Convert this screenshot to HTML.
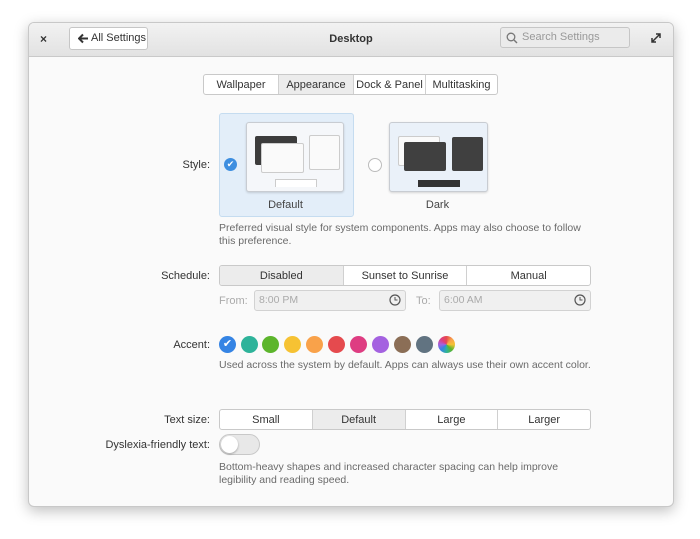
<!DOCTYPE html>
<html><head><style>
body{margin:0;width:700px;height:539px;background:#fff;font-family:"Liberation Sans",sans-serif;font-size:11px;color:#333;position:relative;overflow:hidden;white-space:nowrap}
.win{position:absolute;left:28px;top:22px;width:644px;height:483px;background:#fafafa;border:1px solid #c8c8c8;border-radius:6px;box-shadow:0 4px 14px rgba(0,0,0,.25);overflow:hidden}
.hdr{position:absolute;left:0;top:0;width:644px;height:33px;background:linear-gradient(#f2f2f2,#e2e2e2);border-bottom:1px solid #c9c9c9}
.a{position:absolute}
.btn{position:absolute;background:#fff;border:1px solid #c6c6c6;border-radius:3px;box-sizing:border-box}
.seg{position:absolute;display:flex;border:1px solid #c9c9c9;border-radius:3px;box-sizing:border-box;background:#fff;overflow:hidden}
.seg div{flex:1;text-align:center;border-left:1px solid #d0d0d0;box-sizing:border-box}
.seg div:first-child{border-left:none}
.seg .on{background:#ececec}
.lbl{position:absolute;text-align:right;width:200px}
.c{position:absolute;width:17px;height:17px;border-radius:50%}
.hint{position:absolute;color:#6a6a6a;font-size:10.5px;line-height:13px;white-space:normal}
.inp{position:absolute;background:#f0f0f0;border:1px solid #d2d2d2;border-radius:3px;box-sizing:border-box;height:21px;color:#aaa;padding-left:4px;line-height:19px;font-size:10.5px}
</style></head><body>
<div class="win">
<div class="hdr">
<div class="a" style="left:11px;top:9px;font-size:12px;font-weight:bold">×</div>
<div class="btn" style="left:40px;top:4px;width:79px;height:23px;line-height:21px;padding-left:21px">All Settings</div>
<svg class="a" style="left:49px;top:10px" width="11" height="11"><path d="M1 5.5H10M5 1.5L1 5.5L5 9.5" stroke="#333" stroke-width="2" fill="none"/></svg>
<div class="a" style="left:0;width:644px;top:10px;text-align:center;font-weight:bold">Desktop</div>
<div class="a" style="left:471px;top:4px;width:130px;height:21px;background:#ebebeb;border:1px solid #c6c6c6;border-radius:3px;box-sizing:border-box;color:#999;line-height:19px;padding-left:21px">Search Settings</div>
<svg class="a" style="left:477px;top:9px" width="12" height="12"><circle cx="5" cy="5" r="3.8" fill="none" stroke="#777" stroke-width="1.3"/><path d="M8 8L11 11" stroke="#777" stroke-width="1.4"/></svg>
<svg class="a" style="left:621px;top:9px" width="12" height="12"><path d="M2 10L10 2M6 2H10V6M2 6V10H6" stroke="#333" stroke-width="1.5" fill="none"/></svg>
</div>
<div class="seg" style="left:174px;top:51px;width:295px;height:21px;line-height:20px"><div style="flex:0 0 74px">Wallpaper</div><div class="on" style="flex:0 0 75px">Appearance</div><div style="flex:0 0 72px">Dock &amp; Panel</div><div>Multitasking</div></div>

<div class="lbl" style="left:-19px;top:136px">Style:</div>
<div class="a" style="left:190px;top:90px;width:133px;height:102px;background:#e3eef9;border:1px solid #c5dcf0;border-radius:3px"></div>
<div class="a" style="left:195px;top:135px;width:13px;height:13px;border-radius:50%;background:#3d8ee0;color:#fff;font-size:9px;line-height:13px;text-align:center">✔</div>
<div class="a" style="left:217px;top:99px;width:96px;height:68px;background:#f5f7fa;border:1px solid #c8ccd2;border-radius:3px;box-shadow:0 1px 2px rgba(0,0,0,.15)">
 <div class="a" style="left:8px;top:13px;width:42px;height:29px;background:#3c3c3c;border-radius:2px"></div>
 <div class="a" style="left:14px;top:20px;width:41px;height:28px;background:#fafafa;border:1px solid #ccc;border-radius:2px"></div>
 <div class="a" style="left:62px;top:12px;width:29px;height:33px;background:#fafafa;border:1px solid #ccc;border-radius:2px"></div>
 <div class="a" style="left:28px;top:56px;width:40px;height:7px;border:1px solid #ccc;border-bottom:none;background:#fff"></div>
</div>
<div class="a" style="left:190px;top:176px;width:133px;text-align:center;color:#444">Default</div>
<div class="a" style="left:339px;top:135px;width:12px;height:12px;border-radius:50%;border:1px solid #bbb;background:#fff"></div>
<div class="a" style="left:360px;top:99px;width:97px;height:68px;background:#eaf1f9;border:1px solid #c8ccd2;border-radius:3px;box-shadow:0 1px 2px rgba(0,0,0,.15)">
 <div class="a" style="left:8px;top:13px;width:40px;height:28px;background:#fafafa;border:1px solid #ccc;border-radius:2px"></div>
 <div class="a" style="left:14px;top:19px;width:42px;height:29px;background:#404040;border-radius:2px"></div>
 <div class="a" style="left:62px;top:14px;width:31px;height:34px;background:#404040;border-radius:2px"></div>
 <div class="a" style="left:28px;top:57px;width:42px;height:7px;background:#333"></div>
</div>
<div class="a" style="left:360px;top:176px;width:97px;text-align:center;color:#444">Dark</div>
<div class="hint" style="left:190px;top:199px;width:370px">Preferred visual style for system components. Apps may also choose to follow this preference.</div>

<div class="lbl" style="left:-19px;top:247px">Schedule:</div>
<div class="seg" style="left:190px;top:242px;width:372px;height:21px;line-height:20px"><div class="on">Disabled</div><div>Sunset to Sunrise</div><div>Manual</div></div>
<div class="a" style="left:190px;top:272px;color:#aaa">From:</div>
<div class="inp" style="left:225px;top:267px;width:152px">8:00 PM</div>
<div class="a" style="left:387px;top:272px;color:#aaa">To:</div>
<div class="inp" style="left:410px;top:267px;width:152px">6:00 AM</div>
<svg class="a" style="left:360px;top:271px" width="12" height="12"><circle cx="6" cy="6" r="5" fill="none" stroke="#555" stroke-width="1.2"/><path d="M6 3V6H8.5" stroke="#555" fill="none"/></svg>
<svg class="a" style="left:545px;top:271px" width="12" height="12"><circle cx="6" cy="6" r="5" fill="none" stroke="#555" stroke-width="1.2"/><path d="M6 3V6H8.5" stroke="#555" fill="none"/></svg>

<div class="lbl" style="left:-19px;top:316px">Accent:</div>
<div class="c" style="left:190px;top:313px;background:#3584e4;color:#fff;text-align:center;line-height:17px;font-size:11px">✔</div>
<div class="c" style="left:212px;top:313px;background:#2eb39a"></div>
<div class="c" style="left:233px;top:313px;background:#5cb52c"></div>
<div class="c" style="left:255px;top:313px;background:#f6c233"></div>
<div class="c" style="left:277px;top:313px;background:#f9a24a"></div>
<div class="c" style="left:299px;top:313px;background:#e54a4e"></div>
<div class="c" style="left:321px;top:313px;background:#de3d82"></div>
<div class="c" style="left:343px;top:313px;background:#a462e0"></div>
<div class="c" style="left:365px;top:313px;background:#8b6e56"></div>
<div class="c" style="left:387px;top:313px;background:#617381"></div>
<div class="c" style="left:409px;top:313px;background:conic-gradient(#e54a4e,#f9a24a,#f6c233,#5cb52c,#2eb39a,#3584e4,#a462e0,#de3d82,#e54a4e)"></div>
<div class="hint" style="left:190px;top:336px">Used across the system by default. Apps can always use their own accent color.</div>

<div class="lbl" style="left:-19px;top:391px">Text size:</div>
<div class="seg" style="left:190px;top:386px;width:372px;height:21px;line-height:20px"><div>Small</div><div class="on">Default</div><div>Large</div><div>Larger</div></div>
<div class="lbl" style="left:-19px;top:416px">Dyslexia-friendly text:</div>
<div class="a" style="left:190px;top:411px;width:41px;height:21px;border-radius:11px;background:#e8e8e8;border:1px solid #c8c8c8;box-sizing:border-box"><div class="a" style="left:1px;top:1px;width:17px;height:17px;border-radius:50%;background:#fff;box-shadow:0 1px 2px rgba(0,0,0,.3)"></div></div>
<div class="hint" style="left:190px;top:438px;width:360px">Bottom-heavy shapes and increased character spacing can help improve legibility and reading speed.</div>
</div>
</body></html>
